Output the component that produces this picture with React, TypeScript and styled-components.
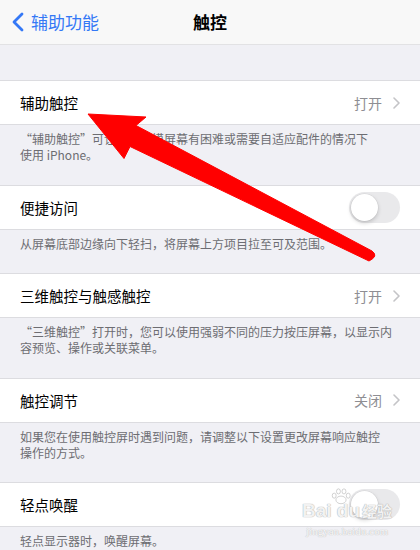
import React from "react";
import styled, { createGlobalStyle } from "styled-components";

const Global = createGlobalStyle`
  html, body { margin: 0; padding: 0; }
  body {
    width: 420px;
    height: 550px;
    overflow: hidden;
    background: #f0f0f5;
    font-family: "Noto Sans CJK SC", "Noto Sans", sans-serif;
    -webkit-font-smoothing: antialiased;
  }
`;

const Screen = styled.div`
  position: relative;
  width: 420px;
  height: 550px;
  overflow: hidden;
  background: #f0f0f5;
`;

const NavBar = styled.div`
  height: 44px;
  background: #f8f8f8;
  border-bottom: 1px solid #e2e2e4;
  display: grid;
  grid-template-columns: 1fr auto 1fr;
  align-items: center;
`;

const Back = styled.div`
  display: flex;
  align-items: center;
  gap: 7px;
  padding-left: 12px;
  color: #3478f6;
  font-size: 17px;
  line-height: 20px;
`;

const Title = styled.div`
  font-size: 17px;
  font-weight: 700;
  color: #000;
  line-height: 20px;
`;

const Spacer = styled.div`
  height: 35px;
`;

const Group = styled.div`
  background: #fff;
  border-top: 1px solid #dcdce0;
  border-bottom: 1px solid #dcdce0;
`;

const Row = styled.div`
  height: 43px;
  display: flex;
  align-items: center;
  justify-content: space-between;
  padding: 0 20px;
`;

const Label = styled.span`
  font-size: 14.5px;
  color: #000;
`;

const Detail = styled.span`
  display: flex;
  align-items: center;
  gap: 11px;
  font-size: 14px;
  color: #8e8e93;
`;

const Footer = styled.div`
  padding: 6px 20px 21.5px;
  font-size: 12px;
  line-height: 16px;
  color: #6d6d72;
`;

const FooterLine = styled.div`
  white-space: nowrap;
`;

const Track = styled.div<{ $on?: boolean }>`
  width: 51px;
  height: 31px;
  border-radius: 16px;
  background: ${(p) => (p.$on ? "#34c759" : "#e9e9eb")};
  position: relative;
`;

const Knob = styled.div<{ $on?: boolean }>`
  position: absolute;
  top: 2px;
  left: ${(p) => (p.$on ? "22px" : "2px")};
  width: 27px;
  height: 27px;
  border-radius: 50%;
  background: #fff;
  box-shadow: 0 2px 4px rgba(0, 0, 0, 0.18), 0 0 0 0.5px rgba(0, 0, 0, 0.06);
`;

const Overlay = styled.svg`
  position: absolute;
  left: 0;
  top: 0;
  pointer-events: none;
`;

const Watermark = styled.div`
  position: absolute;
  left: 302px;
  top: 500px;
  display: flex;
  flex-direction: column;
  align-items: center;
  white-space: nowrap;
  pointer-events: none;
`;

const WmMain = styled.div`
  font-family: "Liberation Sans", "Noto Sans CJK SC", sans-serif;
  font-size: 19px;
  font-weight: 700;
  color: rgba(255, 255, 255, 0.85);
  text-shadow: 0 0 1px #b0b0b0, 0 0 1px #b0b0b0;
  line-height: 22px;
  display: flex;
  align-items: flex-end;
  position: relative;
`;

const WmCn = styled.span`
  font-family: "Noto Sans CJK SC", sans-serif;
  font-size: 15px;
  margin-left: 2px;
`;

const WmUrl = styled.div`
  font-family: "Liberation Serif", serif;
  font-size: 11px;
  color: rgba(255, 255, 255, 0.9);
  text-shadow: 0 0 1px #c0c0c0, 0 0 1px #c0c0c0;
  line-height: 12px;
  margin-top: 3px;
`;

const Chevron = () => (
  <svg width="7" height="12" viewBox="0 0 7 12">
    <path d="M1 1 L6 6 L1 11" fill="none" stroke="#c4c4c7" strokeWidth="1.6" strokeLinecap="round" strokeLinejoin="round" />
  </svg>
);

const BackChevron = () => (
  <svg width="12" height="20" viewBox="0 0 12 20">
    <path d="M10 2 L2 10 L10 18" fill="none" stroke="#3478f6" strokeWidth="2.8" strokeLinecap="round" strokeLinejoin="round" />
  </svg>
);

const Toggle = ({ on }: { on?: boolean }) => (
  <Track $on={on}>
    <Knob $on={on} />
  </Track>
);

type Item = {
  label: string;
  value?: string;
  toggle?: boolean;
  footer: string[];
};

const items: Item[] = [
  {
    label: "辅助触控",
    value: "打开",
    footer: ["“辅助触控”可让您在触摸屏幕有困难或需要自适应配件的情况下", "使用 iPhone。"],
  },
  {
    label: "便捷访问",
    toggle: true,
    footer: ["从屏幕底部边缘向下轻扫，将屏幕上方项目拉至可及范围。"],
  },
  {
    label: "三维触控与触感触控",
    value: "打开",
    footer: ["“三维触控”打开时，您可以使用强弱不同的压力按压屏幕，以显示内", "容预览、操作或关联菜单。"],
  },
  {
    label: "触控调节",
    value: "关闭",
    footer: ["如果您在使用触控屏时遇到问题，请调整以下设置更改屏幕响应触控", "操作的方式。"],
  },
  {
    label: "轻点唤醒",
    toggle: true,
    footer: ["轻点显示器时，唤醒屏幕。"],
  },
];

export default function App() {
  return (
    <>
      <Global />
      <Screen>
        <NavBar>
          <Back>
            <BackChevron />
            <span>辅助功能</span>
          </Back>
          <Title>触控</Title>
          <div />
        </NavBar>
        <Spacer />
        {items.map((it) => (
          <React.Fragment key={it.label}>
            <Group>
              <Row>
                <Label>{it.label}</Label>
                {it.toggle ? (
                  <Toggle />
                ) : (
                  <Detail>
                    {it.value}
                    <Chevron />
                  </Detail>
                )}
              </Row>
            </Group>
            <Footer>
              {it.footer.map((l) => (
                <FooterLine key={l}>{l}</FooterLine>
              ))}
            </Footer>
          </React.Fragment>
        ))}
        <Overlay width="420" height="550" viewBox="0 0 420 550">
          <path
            d="M88 114 L146 117 L136 125.5 L372 251 Q379 256 369 261 L130 146.5 L124 158.5 Z"
            fill="#ff0000"
            stroke="#ff0000"
            strokeWidth="1"
            strokeLinejoin="round"
          />
        </Overlay>
        <Watermark>
          <WmMain>
            <svg width="24" height="17" viewBox="0 0 26 20" style={{ position: "absolute", left: 27, top: -12 }}>
              <g fill="rgba(255,255,255,0.85)" stroke="#bdbdbd" strokeWidth="0.8">
                <ellipse cx="13" cy="14" rx="6" ry="4.5" />
                <ellipse cx="5" cy="9" rx="2.3" ry="3" />
                <ellipse cx="10" cy="4" rx="2.3" ry="3" />
                <ellipse cx="16.5" cy="4" rx="2.3" ry="3" />
                <ellipse cx="21.5" cy="9" rx="2.3" ry="3" />
              </g>
            </svg>
            Bai du<WmCn>经验</WmCn>
          </WmMain>
          <WmUrl>jingyan.baidu.com</WmUrl>
        </Watermark>
      </Screen>
    </>
  );
}
